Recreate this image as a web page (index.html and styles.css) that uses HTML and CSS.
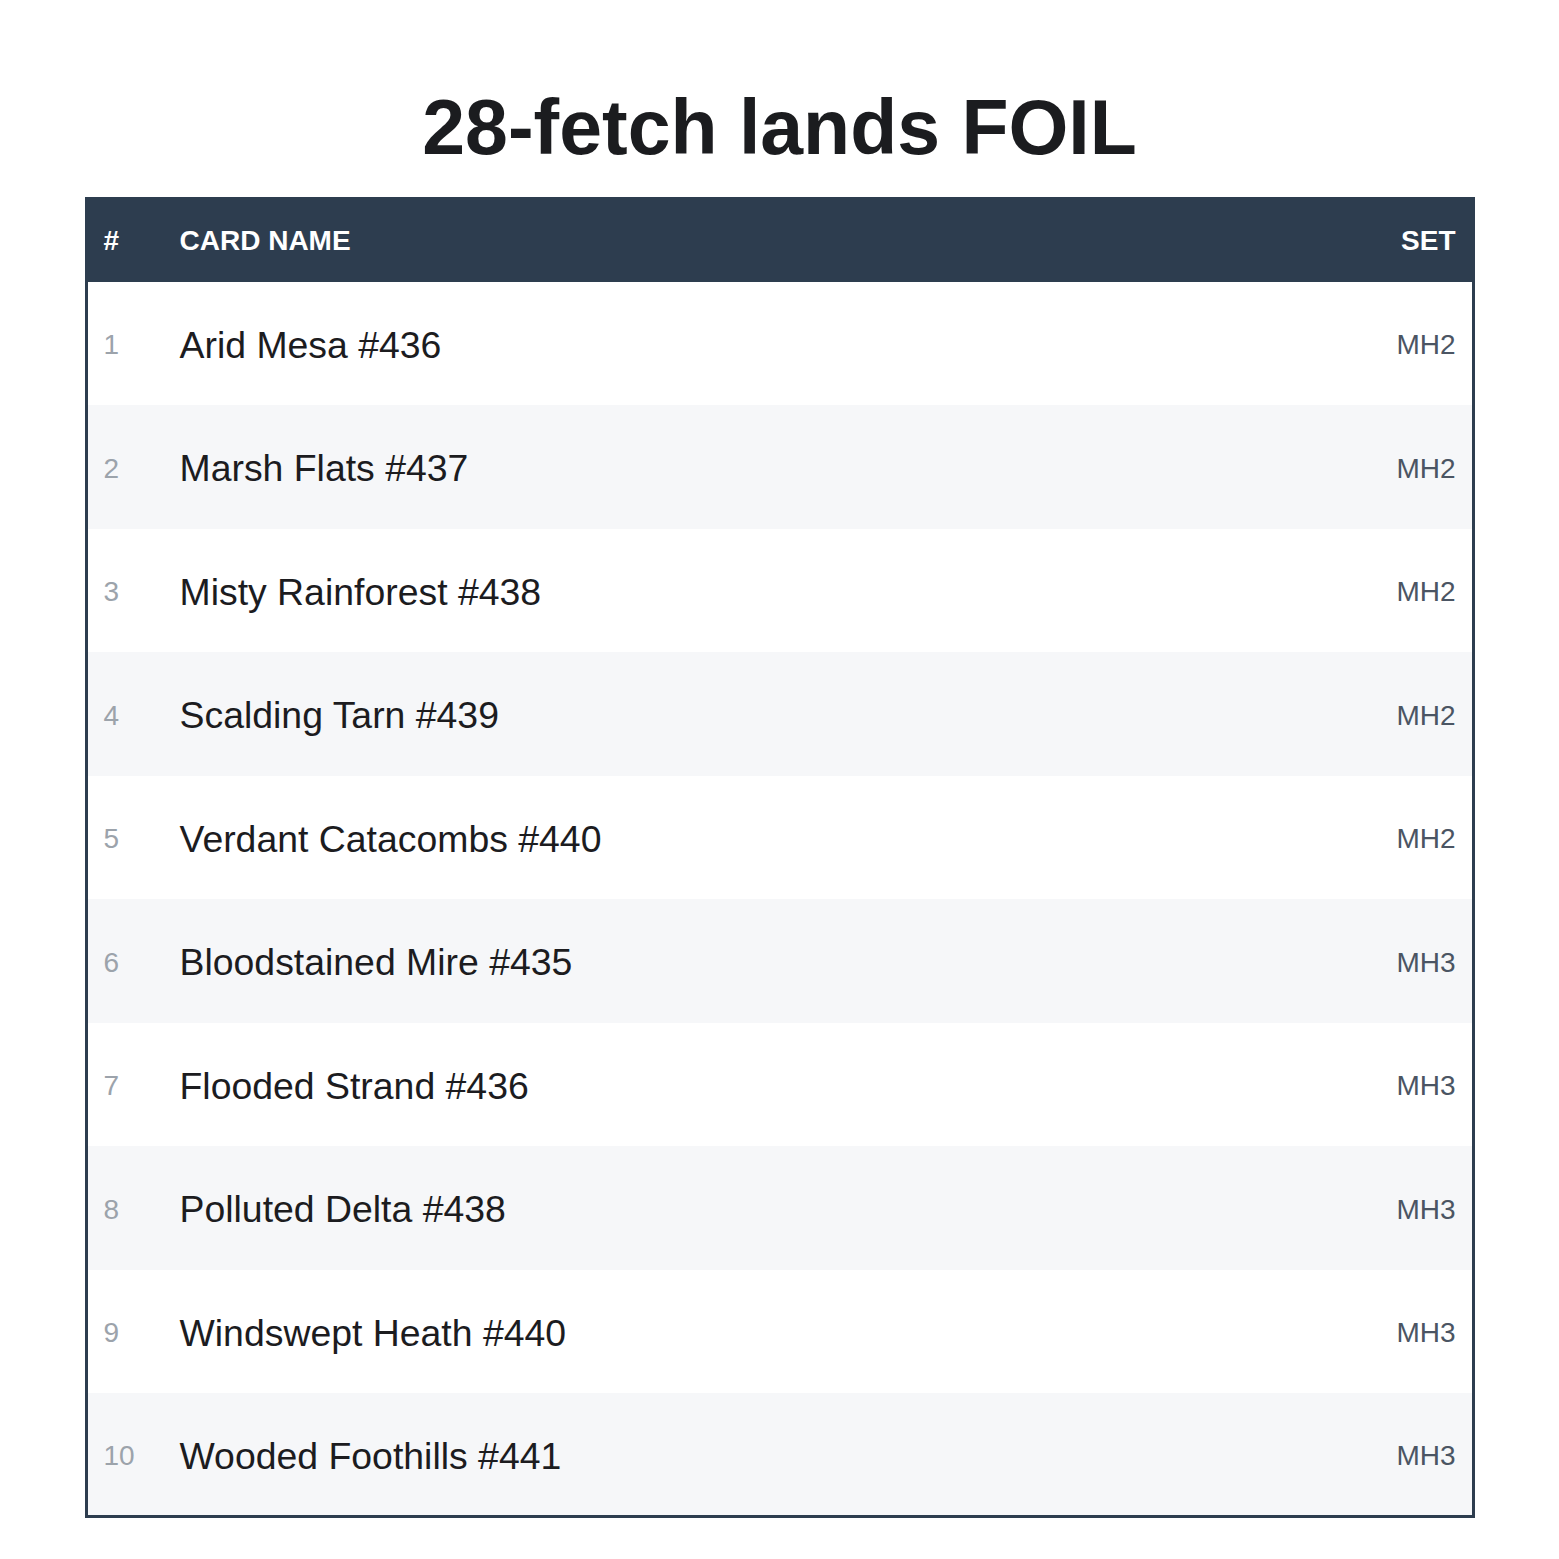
FILE: index.html
```html
<!DOCTYPE html>
<html>
<head>
<meta charset="utf-8">
<link rel="stylesheet" href="styles.css">
</head>
<body>
<div class="page">
  <h1 class="title">28-fetch lands FOIL</h1>
  <table class="cards">
    <thead>
      <tr><th class="c-num">#</th><th class="c-name">CARD NAME</th><th class="c-set">SET</th></tr>
    </thead>
    <tbody>
      <tr><td class="c-num">1</td><td class="c-name">Arid Mesa #436</td><td class="c-set">MH2</td></tr>
      <tr><td class="c-num">2</td><td class="c-name">Marsh Flats #437</td><td class="c-set">MH2</td></tr>
      <tr><td class="c-num">3</td><td class="c-name">Misty Rainforest #438</td><td class="c-set">MH2</td></tr>
      <tr><td class="c-num">4</td><td class="c-name">Scalding Tarn #439</td><td class="c-set">MH2</td></tr>
      <tr><td class="c-num">5</td><td class="c-name">Verdant Catacombs #440</td><td class="c-set">MH2</td></tr>
      <tr><td class="c-num">6</td><td class="c-name">Bloodstained Mire #435</td><td class="c-set">MH3</td></tr>
      <tr><td class="c-num">7</td><td class="c-name">Flooded Strand #436</td><td class="c-set">MH3</td></tr>
      <tr><td class="c-num">8</td><td class="c-name">Polluted Delta #438</td><td class="c-set">MH3</td></tr>
      <tr><td class="c-num">9</td><td class="c-name">Windswept Heath #440</td><td class="c-set">MH3</td></tr>
      <tr><td class="c-num">10</td><td class="c-name">Wooded Foothills #441</td><td class="c-set">MH3</td></tr>
    </tbody>
  </table>
</div>
</body>
</html>
```
FILE: styles.css
```css
html, body {
  margin: 0;
  padding: 0;
  background: #ffffff;
}
body {
  font-family: "Liberation Sans", Arial, sans-serif;
}
.page {
  width: 1390px;
  margin: 0 auto;
  padding-top: 83px;
}
.title {
  margin: 0 0 26px 0;
  text-align: center;
  font-size: 77px;
  font-weight: 700;
  line-height: 88px;
  color: #1b1c1f;
}
.cards {
  width: 1390px;
  border-collapse: collapse;
  border: 3px solid #2d3d4f;
  box-sizing: border-box;
}
.cards thead tr {
  background: #2d3d4f;
  height: 83px;
}
.cards th {
  padding: 0 16px;
  font-size: 28px;
  font-weight: 700;
  color: #ffffff;
  text-align: left;
  vertical-align: middle;
}
.cards tbody tr {
  height: 123.5px;
}
.cards td {
  padding: 4px 16px 0 16px;
  vertical-align: middle;
}
.cards tbody tr:nth-child(even) {
  background: #f6f7f9;
}
.c-num {
  width: 44px;
}
.cards td.c-num {
  font-size: 28px;
  color: #9ca3ab;
}
.cards td.c-name {
  font-size: 37.4px;
  color: #1c1c1f;
}
.cards .c-set {
  text-align: right;
}
.cards td.c-set {
  font-size: 28px;
  color: #4b5563;
}
```
